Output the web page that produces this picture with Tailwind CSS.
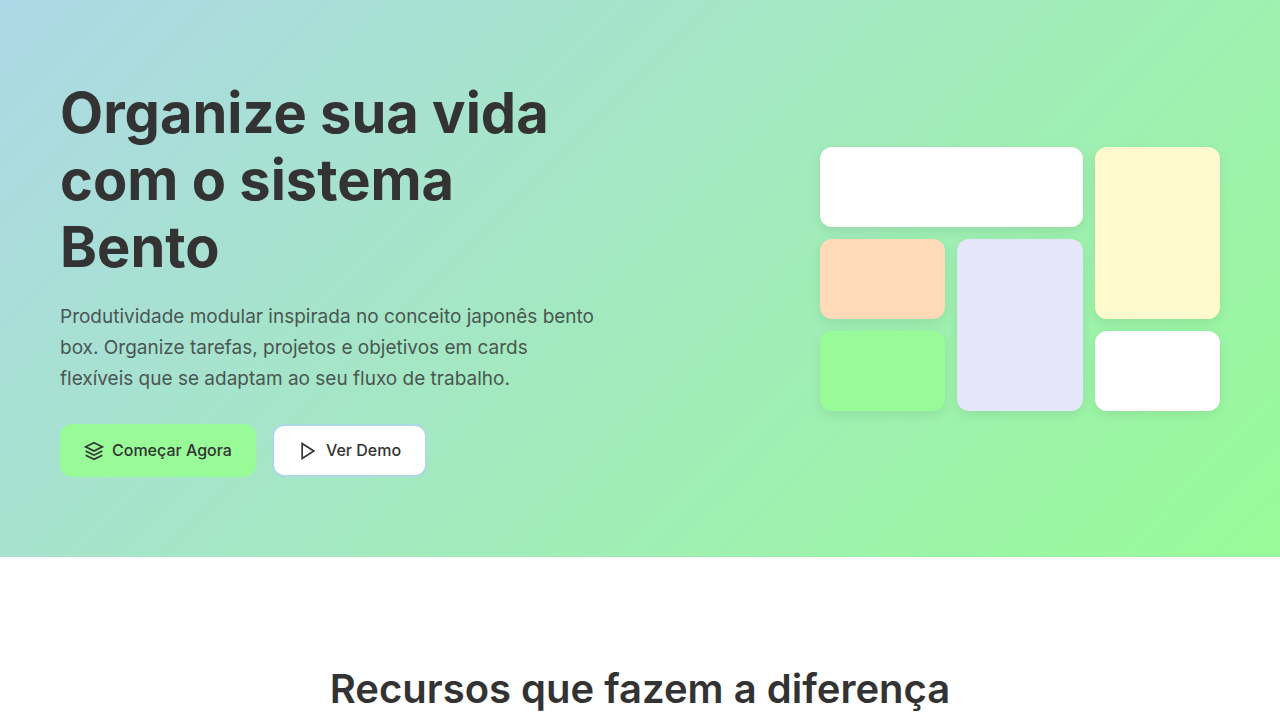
<!DOCTYPE html>
<html lang="pt-BR">
<head>
    <meta charset="UTF-8">
    <meta name="viewport" content="width=device-width, initial-scale=1.0">
    <title>Bento - Organize sua vida</title>
    <script src="https://cdn.jsdelivr.net/npm/@tailwindcss/browser@4"></script>
</head>
<body class="bg-white text-[#333333] font-[Inter,sans-serif]">

    <!-- Hero -->
    <section class="bg-[linear-gradient(135deg,#add8e6_0%,#98fb98_100%)] px-5 py-20">
        <div class="max-w-[1200px] mx-auto px-5 grid grid-cols-1 md:grid-cols-2 gap-20 items-center">
            <div>
                <h1 class="text-[56px] leading-[67px] font-bold mb-5">Organize sua vida com o sistema Bento</h1>
                <p class="text-[19px] leading-[31px] opacity-80 mb-[30px]">Produtividade modular inspirada no conceito japonês bento box. Organize tarefas, projetos e objetivos em cards flexíveis que se adaptam ao seu fluxo de trabalho.</p>
                <div class="flex flex-wrap gap-4">
                    <button type="button" class="flex items-center gap-2 rounded-xl bg-[#98fb98] px-6 py-3.5 text-base leading-[25px] font-medium">
                        <svg class="size-5" viewBox="0 0 24 24" fill="none" stroke="currentColor" stroke-width="2" aria-hidden="true">
                            <path d="M12 2L2 7l10 5 10-5-10-5z"/>
                            <path d="M2 17l10 5 10-5"/>
                            <path d="M2 12l10 5 10-5"/>
                        </svg>
                        Começar Agora
                    </button>
                    <button type="button" class="flex items-center gap-2 rounded-xl border-2 border-[#add8e6] bg-white px-6 py-3 text-base leading-[25px] font-medium">
                        <svg class="size-5" viewBox="0 0 24 24" fill="none" stroke="currentColor" stroke-width="2" aria-hidden="true">
                            <polygon points="5,3 19,12 5,21"/>
                        </svg>
                        Ver Demo
                    </button>
                </div>
            </div>

            <!-- Bento preview -->
            <div class="w-full max-w-[400px] justify-self-end grid grid-cols-3 auto-rows-[80px] gap-3">
                <div class="col-span-2 rounded-xl bg-white shadow-[0_4px_12px_rgba(0,0,0,0.08)]"></div>
                <div class="row-span-2 rounded-xl bg-[#fffacd] shadow-[0_4px_12px_rgba(0,0,0,0.08)]"></div>
                <div class="rounded-xl bg-[#ffdab9] shadow-[0_4px_12px_rgba(0,0,0,0.08)]"></div>
                <div class="row-span-2 rounded-xl bg-[#e6e6fa] shadow-[0_4px_12px_rgba(0,0,0,0.08)]"></div>
                <div class="rounded-xl bg-[#98fb98] shadow-[0_4px_12px_rgba(0,0,0,0.08)]"></div>
                <div class="rounded-xl bg-white shadow-[0_4px_12px_rgba(0,0,0,0.08)]"></div>
            </div>
        </div>
    </section>

    <!-- Recursos -->
    <section class="px-5 py-[100px]">
        <h2 class="text-center text-[40px] leading-[64px] font-semibold">Recursos que fazem a diferença</h2>
    </section>

</body>
</html>
